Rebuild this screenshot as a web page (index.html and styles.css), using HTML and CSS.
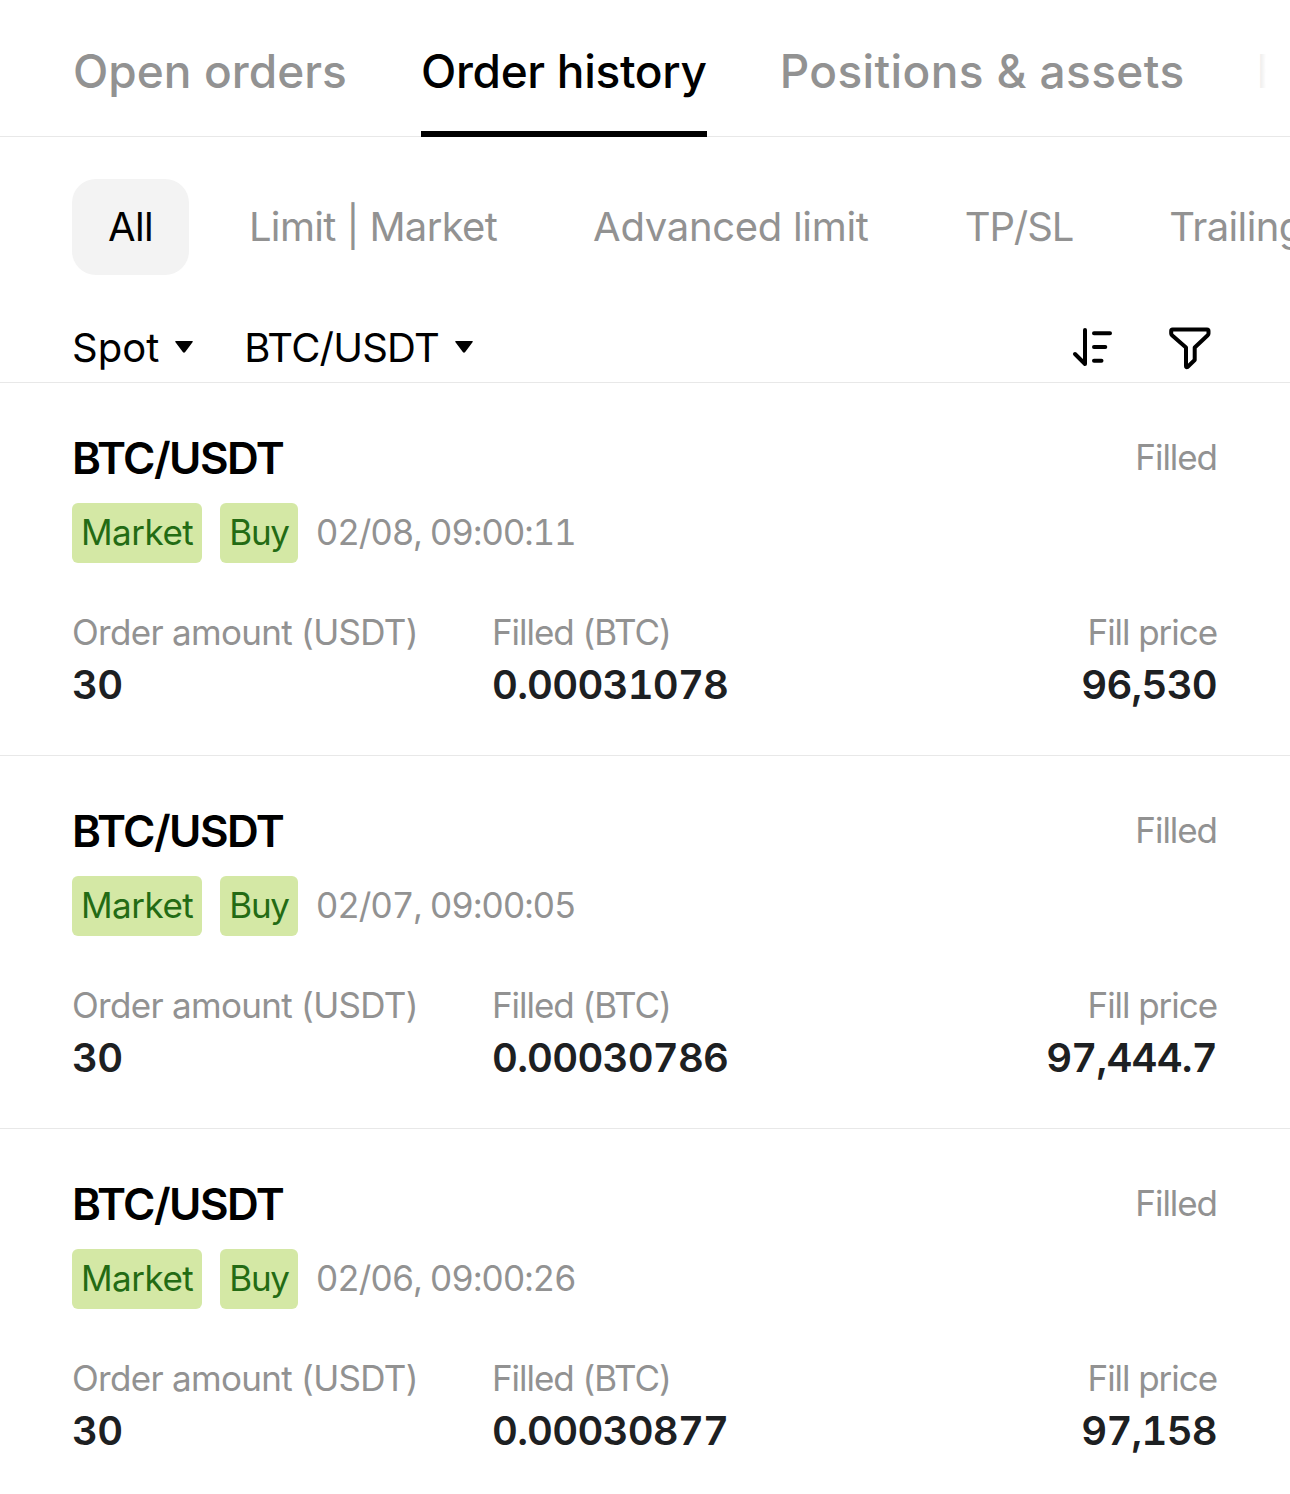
FILE: index.html
```html
<!DOCTYPE html>
<html lang="en">
<head>
    <meta charset="UTF-8">
    <title>Order history</title>
    <link rel="stylesheet" href="styles.css">
</head>
<body>
    <nav class="tabs">
        <a class="tab tab-open">Open orders</a>
        <a class="tab tab-history active">Order history</a>
        <a class="tab tab-positions">Positions &amp; assets</a>
        <a class="tab tab-bots">Bots</a>
        <div class="tabs-fade"></div>
    </nav>

    <div class="chips">
        <span class="chip chip-all active">All</span>
        <span class="chip chip-limit">Limit | Market</span>
        <span class="chip chip-advanced">Advanced limit</span>
        <span class="chip chip-tpsl">TP/SL</span>
        <span class="chip chip-trailing">Trailing stop</span>
    </div>

    <div class="filters">
        <div class="select select-type">Spot
            <svg class="caret" viewBox="0 0 20 14"><path d="M2 1h16q1.500 0 .5 1.300L11.200 12q-1.200 1.300-2.400 0L1.500 2.300Q.5 1 2 1z"/></svg>
        </div>
        <div class="select select-pair">BTC/USDT
            <svg class="caret" viewBox="0 0 20 14"><path d="M2 1h16q1.500 0 .5 1.300L11.200 12q-1.200 1.300-2.400 0L1.500 2.300Q.5 1 2 1z"/></svg>
        </div>
        <div class="actions">
            <svg class="icon" viewBox="0 0 48 48"><path d="M16 8v34L6 32M25 11.200h16M25 25h11.300M25 38.800h7.500"/></svg>
            <svg class="icon" viewBox="0 0 48 48"><path d="M6.500 7.500h34.500q1.500 0 1.500 1.500v2.500q0 1-.8 1.700L28.700 25.500V38L21.500 45q-1.500.8-1.500-1V25.500L6 13.200q-.8-.7-.8-1.700V9q0-1.500 1.300-1.500z"/></svg>
        </div>
    </div>

    <div class="order">
        <div class="order-head">
            <h2 class="symbol">BTC/USDT</h2>
            <span class="status">Filled</span>
        </div>
        <div class="meta">
            <span class="tag tag-market">Market</span>
            <span class="tag tag-buy">Buy</span>
            <span class="date">02/08, 09:00:11</span>
        </div>
        <div class="details">
            <div>
                <div class="label label-amount">Order amount (USDT)</div>
                <div class="value">30</div>
            </div>
            <div>
                <div class="label">Filled (BTC)</div>
                <div class="value">0.00031078</div>
            </div>
            <div class="price">
                <div class="label">Fill price</div>
                <div class="value">96,530</div>
            </div>
        </div>
    </div>

    <div class="order">
        <div class="order-head">
            <h2 class="symbol">BTC/USDT</h2>
            <span class="status">Filled</span>
        </div>
        <div class="meta">
            <span class="tag tag-market">Market</span>
            <span class="tag tag-buy">Buy</span>
            <span class="date">02/07, 09:00:05</span>
        </div>
        <div class="details">
            <div>
                <div class="label label-amount">Order amount (USDT)</div>
                <div class="value">30</div>
            </div>
            <div>
                <div class="label">Filled (BTC)</div>
                <div class="value">0.00030786</div>
            </div>
            <div class="price">
                <div class="label">Fill price</div>
                <div class="value">97,444.7</div>
            </div>
        </div>
    </div>

    <div class="order">
        <div class="order-head">
            <h2 class="symbol">BTC/USDT</h2>
            <span class="status">Filled</span>
        </div>
        <div class="meta">
            <span class="tag tag-market">Market</span>
            <span class="tag tag-buy">Buy</span>
            <span class="date">02/06, 09:00:26</span>
        </div>
        <div class="details">
            <div>
                <div class="label label-amount">Order amount (USDT)</div>
                <div class="value">30</div>
            </div>
            <div>
                <div class="label">Filled (BTC)</div>
                <div class="value">0.00030877</div>
            </div>
            <div class="price">
                <div class="label">Fill price</div>
                <div class="value">97,158</div>
            </div>
        </div>
    </div>
</body>
</html>
```
FILE: styles.css
```css
* {
    box-sizing: border-box;
}
body {
    margin: 0;
    height: 1494px;
    overflow: hidden;
    background-color: #fff;
    color: #000;
    font-family: Inter, "Liberation Sans", sans-serif;
    white-space: nowrap;
}

/* top tabs */
.tabs {
    position: relative;
    display: flex;
    gap: 74px;
    height: 137px;
    padding-left: 73px;
    box-shadow: inset 0 -1px #e8e8e8;
    overflow: hidden;
}
.tab {
    flex: none;
    height: 137px;
    padding-top: 8px;
    line-height: 126px;
    font-size: 46px;
    font-weight: 500;
    color: #929292;
}
.tab.active {
    color: #000;
    border-bottom: 6px solid #000;
}
.tab-open {
    letter-spacing: 0.05px;
}
.tab-history {
    letter-spacing: -0.3px;
}
.tab-positions {
    margin-left: -1px;
    letter-spacing: 0.37px;
}
.tab-bots {
    margin-left: -2px;
}
.tabs-fade {
    position: absolute;
    top: 0;
    right: 0;
    width: 60px;
    height: 136px;
    background: linear-gradient(to right, rgba(255,255,255,0), #fff 60%);
}

/* order type chips */
.chips {
    display: flex;
    gap: 24px;
    padding: 42px 0 0 72px;
    overflow: hidden;
}
.chip {
    flex: none;
    height: 96px;
    padding: 0 36px;
    border-radius: 24px;
    line-height: 96px;
    font-size: 40px;
    color: #929292;
}
.chip.active {
    background-color: #f3f3f3;
    color: #000;
}
.chip-all,
.chip-limit {
    letter-spacing: -0.68px;
}
.chip-advanced {
    letter-spacing: -0.3px;
}
.chip-tpsl {
    letter-spacing: -1.1px;
}
.chip-trailing {
    letter-spacing: -0.6px;
}

.filters {
    display: flex;
    align-items: center;
    height: 108px;
    padding: 38px 76px 0 72px;
    border-bottom: 1px solid #e8e8e8;
}
.select {
    display: flex;
    align-items: center;
    gap: 15px;
    margin-right: 50px;
    font-size: 40px;
}
.select-pair {
    letter-spacing: -0.8px;
}
.caret {
    width: 20px;
    height: 14px;
    margin-top: -2px;
}
.actions {
    display: flex;
    gap: 49px;
    margin-top: -3px;
    margin-left: auto;
}
.icon {
    width: 48px;
    height: 48px;
    fill: none;
    stroke: #000;
    stroke-width: 4;
    stroke-linecap: round;
    stroke-linejoin: round;
}

/* order rows */
.order {
    height: 373px;
    padding: 46px 73px 0 72px;
    border-bottom: 1px solid #e8e8e8;
}
.order:last-child {
    border-bottom: none;
}
.order-head {
    display: flex;
    justify-content: space-between;
    height: 58px;
    line-height: 58px;
}
.symbol {
    margin: 0;
    font-size: 44px;
    font-weight: 600;
    letter-spacing: -1.55px;
}
.status,
.label,
.date {
    font-size: 35px;
    letter-spacing: -1.05px;
    color: #929292;
}
.status {
    line-height: 56px;
}
.meta {
    display: flex;
    gap: 18px;
    margin-top: 16px;
    line-height: 59px;
}
.tag {
    height: 60px;
    padding: 0 9px;
    border-radius: 6px;
    background-color: #d4e8a5;
    color: #236b14;
    font-size: 35px;
}
.tag-market {
    letter-spacing: -0.5px;
}
.tag-buy {
    letter-spacing: -1.3px;
}
.date {
    letter-spacing: -1.15px;
    font-variant-numeric: tabular-nums;
}
.details {
    display: grid;
    grid-template-columns: 420px 1fr auto;
    margin-top: 43px;
}
.label {
    line-height: 52px;
}
.label-amount {
    letter-spacing: -0.7px;
}
.value {
    margin-top: 1px;
    line-height: 52px;
    font-size: 40px;
    font-weight: 600;
    font-variant-numeric: tabular-nums;
    letter-spacing: -0.75px;
    color: #1d2022;
}
.price {
    text-align: right;
}
```
